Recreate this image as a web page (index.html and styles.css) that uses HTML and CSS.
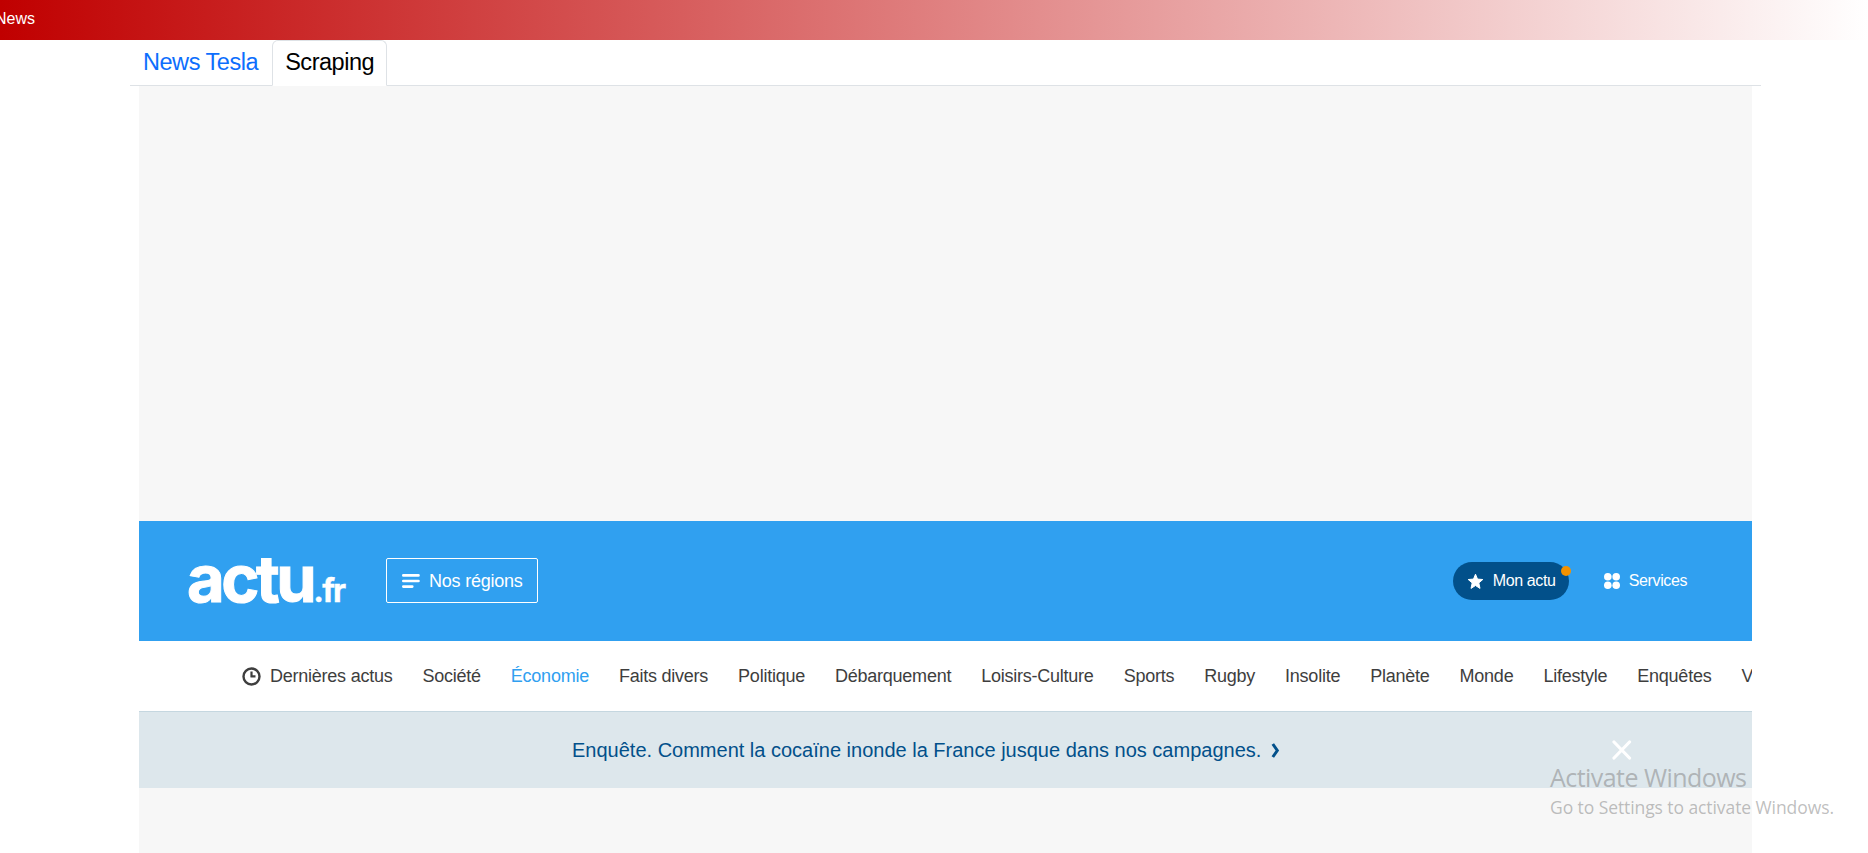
FILE: index.html
```html
<!DOCTYPE html>
<html lang="fr">
<head>
<meta charset="utf-8">
<title>News</title>
<link rel="stylesheet" href="styles.css">
</head>
<body>
<header class="topbar"><span class="topbar-title">News</span></header>
<main class="container">
  <nav class="tabs">
    <a class="tab">News Tesla</a>
    <a class="tab active">Scraping</a>
  </nav>
  <section class="frame">
    <div class="ad"></div>
    <div class="site-header">
      <div class="logo"><span class="logo-main">actu</span><span class="logo-ext">.fr</span></div>
      <a class="regions">
        <svg width="18" height="14" viewBox="0 0 18 14" stroke="#fff" stroke-width="2.6" stroke-linecap="round"><path d="M1.3 1.4H16.5M1.3 7H16.5M1.3 12.600H10.3"/></svg>
        <span>Nos régions</span>
      </a>
      <div class="actions">
        <a class="my-actu">
          <svg width="17" height="17" viewBox="0 0 17 17"><path d="M8.5 1.200 10.500 6.100 15.800 6.500 11.800 9.900 13 15.400 8.500 12.500 4 15.400 5.200 9.900 1.200 6.500 6.500 6.100Z" fill="#fff" stroke="#fff" stroke-linejoin="round"/></svg>
          <span>Mon actu</span>
          <i class="badge"></i>
        </a>
        <a class="services">
          <svg width="16" height="16" viewBox="0 0 16 16" fill="#fff"><circle cx="3.800" cy="3.800" r="3.800"/><circle cx="12.200" cy="3.800" r="3.800"/><circle cx="3.800" cy="12.200" r="3.800"/><circle cx="12.200" cy="12.200" r="3.800"/></svg>
          <span>Services</span>
        </a>
      </div>
    </div>
    <nav class="sections">
      <a class="latest"><svg width="19" height="19" viewBox="0 0 19 19" fill="none" stroke="#3e3e3e"><circle cx="9.500" cy="9.500" r="8" stroke-width="2.400"/><path d="M9.500 4.500V10M8.500 9.300H13.500" stroke-width="2.200"/></svg><span>Dernières actus</span></a>
      <a>Société</a><a class="current">Économie</a><a>Faits divers</a><a>Politique</a><a>Débarquement</a><a>Loisirs-Culture</a><a>Sports</a><a>Rugby</a><a>Insolite</a><a>Planète</a><a>Monde</a><a>Lifestyle</a><a>Enquêtes</a><a>V</a>
    </nav>
    <div class="banner">
      <a class="banner-link"><span>Enquête. Comment la cocaïne inonde la France jusque dans nos campagnes.</span>
        <svg width="9" height="15" viewBox="0 0 9 15" fill="none" stroke="#02508a" stroke-width="3"><path d="M1.800 1 6.300 7.500 1.800 14"/></svg></a>
      <svg class="close" width="20" height="20" viewBox="0 0 20 20" stroke="#fff" stroke-width="3.200" stroke-linecap="round"><path d="M2 2 17.500 18M17.500 2 2 18"/></svg>
    </div>
  </section>
</main>
<aside class="watermark">
  <p class="wm-title">Activate Windows</p>
  <p class="wm-text">Go to Settings to activate Windows.</p>
</aside>
</body>
</html>
```

FILE: styles.css
```css
* { box-sizing: border-box; }
body { margin: 0; height: 853px; overflow: hidden; background: #fff; font-family: "Liberation Sans", Arial, sans-serif; display: flex; flex-direction: column; }
.topbar { height: 40px; flex: none; display: flex; align-items: center; background: linear-gradient(to right, #c00000, #fff); color: #fff; font-size: 16px; }
.topbar-title { margin-left: -5px; margin-top: -3px; }
.container { width: 1631px; margin-left: 130px; flex: 1; display: flex; flex-direction: column; }
.tabs { display: flex; height: 46px; border-bottom: 1px solid #dee2e6; }
.tab { height: 46px; padding: 0 12px; border: 1px solid transparent; color: #0d6efd; font-size: 23.5px; letter-spacing: -.46px; line-height: 42px; white-space: nowrap; }
.tab.active { color: #000; background: #fff; border-color: #dee2e6 #dee2e6 #fff; border-radius: 6px 6px 0 0; margin-left: 1px; }
.frame { flex: 1; margin: 0 9px; background: #f7f7f7; overflow: hidden; }
.ad { height: 435px; }
.site-header { height: 120px; background: #30a0f0; color: #fff; display: flex; align-items: center; padding: 0 65px 0 48px; }
.logo { font-family: Inter, "Liberation Sans", sans-serif; font-weight: 700; width: 158px; white-space: nowrap; line-height: 60px; margin-right: 41px; padding-top: 12px; }
.logo-main { font-size: 65px; letter-spacing: -3.5px; -webkit-text-stroke: 1px #fff; }
.logo-ext { font-size: 32px; font-weight: 700; letter-spacing: -1.8px; -webkit-text-stroke: .4px #fff; }
.regions { width: 152px; height: 45px; margin-top: -1px; border: 1px solid #fff; border-radius: 2px; display: flex; align-items: center; gap: 9px; padding-left: 15px; padding-top: 1px; font-size: 18px; letter-spacing: -.22px; white-space: nowrap; }
.actions { margin-left: auto; display: flex; gap: 35px; align-items: center; font-size: 16px; letter-spacing: -.4px; white-space: nowrap; }
.my-actu { position: relative; width: 116px; height: 38px; border-radius: 19px; background: #02508a; display: flex; align-items: center; gap: 9px; padding-left: 14px; }
.badge { position: absolute; width: 10px; height: 10px; border-radius: 50%; background: #f39200; right: -2px; top: 4px; }
.services { display: flex; align-items: center; gap: 9px; }
.sections { height: 70px; background: #fff; color: #3e3e3e; display: flex; align-items: center; gap: 30px; padding-left: 103px; font-size: 18px; letter-spacing: -.24px; white-space: nowrap; }
.sections a { flex: none; }
.latest { display: flex; align-items: center; gap: 9px; }
.current { color: #30a0f0; }
.banner { height: 77px; background: #dde7ec; border-top: 1px solid #c5d7e0; color: #02508a; font-size: 20px; display: grid; grid-template-columns: 433px 1fr 140px; align-items: center; }
.banner-link { grid-column: 2; display: flex; align-items: center; gap: 10px; white-space: nowrap; }
.close { grid-column: 3; }
.watermark { position: absolute; left: 1550px; top: 761px; font-family: "Open Sans", "Noto Sans", sans-serif; color: rgba(130, 130, 130, .52); white-space: nowrap; }
.watermark p { margin: 0; }
.wm-title { font-size: 25px; letter-spacing: -.55px; line-height: 32px; }
.wm-text { font-size: 17.5px; letter-spacing: -.08px; line-height: 28px; }
```
